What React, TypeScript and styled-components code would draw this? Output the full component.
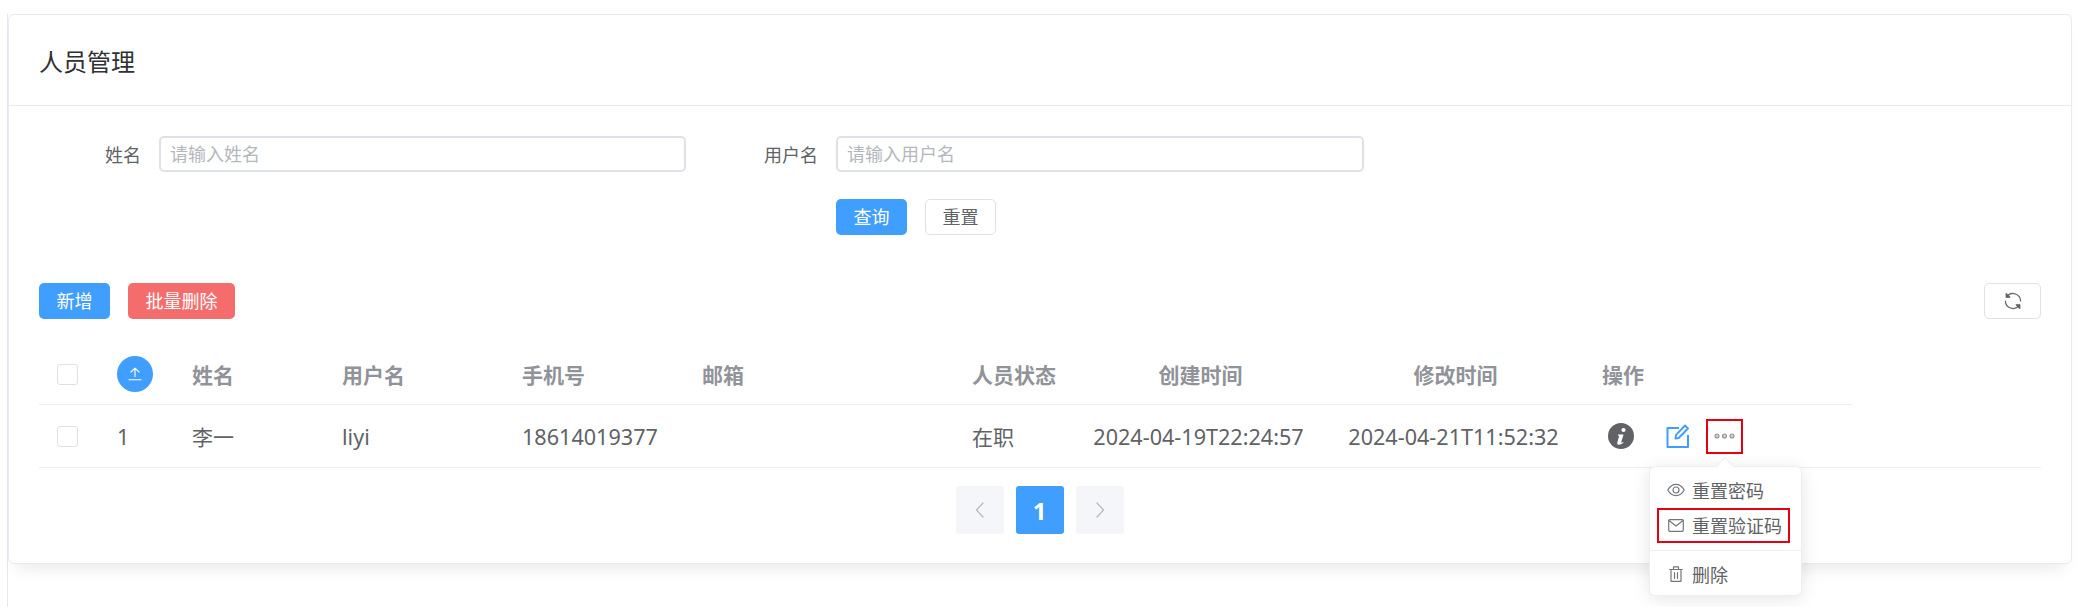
import React from 'react';
import styled, { createGlobalStyle } from 'styled-components';

const GlobalStyle = createGlobalStyle`
  html, body {
    margin: 0;
    padding: 0;
    background: #fff;
    overflow: hidden;
    font-family: "Noto Sans", "Noto Sans CJK SC", sans-serif;
  }
  * { box-sizing: border-box; }
`;

const Page = styled.div`
  margin: 14px 13px 0 7px;
  height: 593px;
  border-left: 1px solid #e6e8f0;
`;

const Card = styled.div`
  height: 550px;
  background: #fff;
  border: 1px solid #e8eaf2;
  border-radius: 6px;
  box-shadow: 0 12px 16px -8px rgba(0, 0, 0, 0.09);
`;

const CardHeader = styled.div`
  height: 91px;
  padding-left: 30px;
  display: flex;
  align-items: center;
  border-bottom: 1px solid #e8eaf2;
  font-size: 24px;
  color: #303133;
`;

const CardBody = styled.div`
  padding: 30px 30px 0;
`;

const SearchForm = styled.form`
  display: grid;
  grid-template-columns: 120px 527px 150px 528px;
  row-gap: 27px;
  align-items: center;
`;

const FieldLabel = styled.label`
  padding-right: 18px;
  text-align: right;
  font-size: 18px;
  color: #606266;
`;

const TextInput = styled.input`
  height: 36px;
  width: 100%;
  padding: 0 9px;
  border: 2px solid #dfe1e9;
  border-radius: 5px;
  outline: none;
  font: inherit;
  font-size: 18px;
  color: #606266;

  &::placeholder {
    color: #b4b7bd;
  }
`;

const FormActions = styled.div`
  grid-column: 4;
  display: flex;
  gap: 18px;
`;

const Button = styled.button<{ $tone?: 'primary' | 'danger' | 'plain' }>`
  height: 36px;
  padding: 0 ${p => (p.$tone === 'primary' || p.$tone === 'danger' ? '17.5px' : '16.5px')};
  border-radius: 5px;
  font: inherit;
  font-size: 18px;
  line-height: 1;
  display: inline-flex;
  align-items: center;
  justify-content: center;
  background: ${p => (p.$tone === 'primary' ? '#409eff' : p.$tone === 'danger' ? '#f56c6c' : '#fff')};
  color: ${p => (p.$tone === 'primary' || p.$tone === 'danger' ? '#fff' : '#606266')};
  border: ${p => (p.$tone === 'primary' || p.$tone === 'danger' ? 'none' : '1px solid #dfe1e9')};
`;

const RefreshButton = styled(Button)`
  width: 57px;
  padding: 0;
`;

const Toolbar = styled.div`
  margin-top: 48px;
  display: flex;
  gap: 18px;
`;

const ToolbarSpacer = styled.div`
  flex: 1;
`;

const Table = styled.div`
  margin-top: 25px;
`;

const HeaderRow = styled.div`
  width: 1814px;
  height: 61px;
  display: flex;
  align-items: center;
  border-bottom: 1px solid #ebeef5;
  font-size: 21px;
  font-weight: 700;
  color: #909399;
`;

const DataRow = styled.div`
  height: 63px;
  display: flex;
  align-items: center;
  border-bottom: 1px solid #ebeef5;
  font-size: 21px;
  color: #606266;
`;

const Cell = styled.div<{ $width: number; $center?: boolean; $digits?: boolean }>`
  width: ${p => p.$width}px;
  flex: none;
  display: flex;
  align-items: center;
  justify-content: ${p => (p.$center ? 'center' : 'flex-start')};
  font-size: ${p => (p.$digits ? '21.6px' : 'inherit')};
`;

const CheckCell = styled(Cell)`
  padding-left: 18px;
`;

const HeaderDateCell = styled(Cell)`
  padding-left: 1px;
`;

const DateCell = styled(Cell)`
  padding-right: 3px;
`;

const ActionsTitle = styled(Cell)`
  padding-left: 12px;
`;

const Checkbox = styled.span`
  width: 21px;
  height: 21px;
  border: 1px solid #dfe1e9;
  border-radius: 3px;
  background: #fff;
`;

const SortBadge = styled.span`
  width: 36px;
  height: 36px;
  border-radius: 50%;
  background: #409eff;
  display: flex;
  align-items: center;
  justify-content: center;
`;

const Actions = styled.div`
  padding-left: 18px;
  display: flex;
  align-items: center;
`;

const InfoIcon = styled.span`
  width: 26px;
  height: 26px;
  border-radius: 50%;
  background: #606266;
  display: flex;
`;

const EditIcon = styled.span`
  margin-left: 32px;
  display: flex;
`;

const MoreWrap = styled.div`
  position: relative;
  margin-left: 16px;
`;

const MoreButton = styled.span`
  width: 37px;
  height: 35px;
  border: 2px solid #e60012;
  display: flex;
  align-items: center;
  justify-content: center;
`;

const Dropdown = styled.div`
  position: absolute;
  top: 47px;
  left: -57px;
  width: 153px;
  height: 130px;
  padding-top: 6px;
  background: #fff;
  border: 1px solid #ebeef5;
  border-radius: 6px;
  box-shadow: 0 3px 18px rgba(0, 0, 0, 0.1);
  z-index: 2;

  &::before {
    content: '';
    position: absolute;
    top: -7px;
    left: 68px;
    width: 13px;
    height: 13px;
    background: #fff;
    border-top: 1px solid #ebeef5;
    border-left: 1px solid #ebeef5;
    transform: rotate(45deg);
  }
`;

const MenuItem = styled.div<{ $marked?: boolean }>`
  position: relative;
  height: 35px;
  margin: 0 11px 0 7px;
  padding-left: 8px;
  display: flex;
  align-items: center;
  gap: 7px;
  font-size: 18px;
  color: #606266;
  border: 2px solid ${p => (p.$marked ? '#e60012' : 'transparent')};
`;

const MenuIcon = styled.span`
  width: 18px;
  flex: none;
  display: flex;
  justify-content: center;
`;

const MenuDivider = styled.div`
  margin: 7px 0 6px;
  border-top: 1px solid #ebeef5;
`;

const Pagination = styled.div`
  margin-top: 18px;
  display: flex;
  justify-content: center;
  gap: 12px;
  padding-right: 1px;
`;

const PageButton = styled.div<{ $active?: boolean }>`
  width: 48px;
  height: 48px;
  border-radius: 3px;
  display: flex;
  align-items: center;
  justify-content: center;
  font-size: 24px;
  font-weight: 700;
  background: ${p => (p.$active ? '#409eff' : '#f5f6fa')};
  color: ${p => (p.$active ? '#fff' : '#c0c4cc')};
`;

const icon = { fill: 'none', stroke: 'currentColor', strokeLinecap: 'round', strokeLinejoin: 'round' } as const;

const UploadGlyph = () => (
  <svg width="14" height="14" viewBox="0 0 14 14" color="#fff" {...icon} strokeWidth="1.100">
    <path d="M7 9.500V1.200M3 5 7 1.200 11 5" />
    <path d="M1 12.800h12" />
  </svg>
);

const InfoGlyph = () => (
  <svg width="26" height="26" viewBox="0 0 26 26" fill="#fff">
    <circle cx="15.500" cy="7" r="2.100" />
    <path d="M10 11.500h5.600l-2.400 7.600c-.2.700.5.800 2-.4l.4.600c-2 2-3.300 2.400-4.700 2.400-1.500 0-2-1-1.600-2.300l1.700-5.800c.2-.8-.2-1-1.200-1z" />
  </svg>
);

const EditGlyph = () => (
  <svg width="24" height="24" viewBox="0 0 24 24" color="#409eff" {...icon} strokeWidth="2">
    <path d="M12 4H1.500v19H22V12" strokeLinecap="square" strokeLinejoin="round" />
    <path d="M9.500 14.500l.6-3.600L19 1.500l3 3-9.300 9.500z" strokeWidth="1.900" />
  </svg>
);

const DotsGlyph = () => (
  <svg width="21" height="6" viewBox="0 0 21 6" color="#909399" fill="#d0d2d6" stroke="currentColor" strokeWidth="1.100">
    <circle cx="3" cy="3" r="2" />
    <circle cx="10.500" cy="3" r="2" />
    <circle cx="18" cy="3" r="2" />
  </svg>
);

const RefreshGlyph = () => (
  <svg width="18" height="18" viewBox="0 0 18 18" color="#606266" {...icon} strokeWidth="1.200">
    <path d="M3 4.500A7.600 7.600 0 0 1 16.600 9" />
    <path d="M15 13.500A7.600 7.600 0 0 1 1.400 9" />
    <path d="M2.200 1.600v3.600h3.600z" fill="currentColor" />
    <path d="M15.800 16.400v-3.600h-3.600z" fill="currentColor" />
  </svg>
);

const EyeGlyph = () => (
  <svg width="18" height="14" viewBox="0 0 18 14" color="#73767a" {...icon} strokeWidth="1.200">
    <path d="M.8 7C3 3.200 5.800 1.400 9 1.400S15 3.200 17.200 7C15 10.800 12.200 12.600 9 12.600S3 10.800.8 7z" />
    <circle cx="9" cy="7" r="3" />
  </svg>
);

const MailGlyph = () => (
  <svg width="16" height="13" viewBox="0 0 16 13" color="#73767a" {...icon} strokeWidth="1.200">
    <rect x=".7" y=".7" width="14.600" height="11.600" rx="1" />
    <path d="M1 1.500l7 5.500 7-5.500" />
  </svg>
);

const TrashGlyph = () => (
  <svg width="14" height="16" viewBox="0 0 14 16" color="#73767a" {...icon} strokeWidth="1.200">
    <path d="M.7 3.500h12.600M4.500 3.500V.8h5v2.700M2 3.500v11.800h10V3.500M5.500 6.500v6M8.500 6.500v6" />
  </svg>
);

const ChevronGlyph = ({ dir }: { dir: 'left' | 'right' }) => (
  <svg width="10" height="16" viewBox="0 0 10 16" color="#b4b7bd" {...icon} strokeWidth="1.200">
    <path d={dir === 'left' ? 'M8 1 1.500 8 8 15' : 'M2 1l6.500 7L2 15'} />
  </svg>
);

export default function App() {
  return (
    <>
      <GlobalStyle />
      <Page>
        <Card>
          <CardHeader>人员管理</CardHeader>
          <CardBody>
            <SearchForm>
              <FieldLabel>姓名</FieldLabel>
              <TextInput placeholder="请输入姓名" />
              <FieldLabel>用户名</FieldLabel>
              <TextInput placeholder="请输入用户名" />
              <FormActions>
                <Button type="button" $tone="primary">查询</Button>
                <Button type="button">重置</Button>
              </FormActions>
            </SearchForm>

            <Toolbar>
              <Button type="button" $tone="primary">新增</Button>
              <Button type="button" $tone="danger">批量删除</Button>
              <ToolbarSpacer />
              <RefreshButton type="button"><RefreshGlyph /></RefreshButton>
            </Toolbar>

            <Table>
              <HeaderRow>
                <CheckCell $width={78}><Checkbox /></CheckCell>
                <Cell $width={75}><SortBadge><UploadGlyph /></SortBadge></Cell>
                <Cell $width={150}>姓名</Cell>
                <Cell $width={180}>用户名</Cell>
                <Cell $width={180}>手机号</Cell>
                <Cell $width={270}>邮箱</Cell>
                <Cell $width={108}>人员状态</Cell>
                <HeaderDateCell $width={240} $center>创建时间</HeaderDateCell>
                <HeaderDateCell $width={270} $center>修改时间</HeaderDateCell>
                <ActionsTitle $width={260}>操作</ActionsTitle>
              </HeaderRow>
              <DataRow>
                <CheckCell $width={78}><Checkbox /></CheckCell>
                <Cell $width={75} $digits>1</Cell>
                <Cell $width={150}>李一</Cell>
                <Cell $width={180} $digits>liyi</Cell>
                <Cell $width={180} $digits>18614019377</Cell>
                <Cell $width={270} />
                <Cell $width={108}>在职</Cell>
                <DateCell $width={240} $center $digits>2024-04-19T22:24:57</DateCell>
                <DateCell $width={270} $center $digits>2024-04-21T11:52:32</DateCell>
                <Cell $width={260}>
                  <Actions>
                    <InfoIcon><InfoGlyph /></InfoIcon>
                    <EditIcon><EditGlyph /></EditIcon>
                    <MoreWrap>
                      <MoreButton><DotsGlyph /></MoreButton>
                      <Dropdown>
                        <MenuItem><MenuIcon><EyeGlyph /></MenuIcon>重置密码</MenuItem>
                        <MenuItem $marked><MenuIcon><MailGlyph /></MenuIcon>重置验证码</MenuItem>
                        <MenuDivider />
                        <MenuItem><MenuIcon><TrashGlyph /></MenuIcon>删除</MenuItem>
                      </Dropdown>
                    </MoreWrap>
                  </Actions>
                </Cell>
              </DataRow>
            </Table>

            <Pagination>
              <PageButton><ChevronGlyph dir="left" /></PageButton>
              <PageButton $active>1</PageButton>
              <PageButton><ChevronGlyph dir="right" /></PageButton>
            </Pagination>
          </CardBody>
        </Card>
      </Page>
    </>
  );
}
